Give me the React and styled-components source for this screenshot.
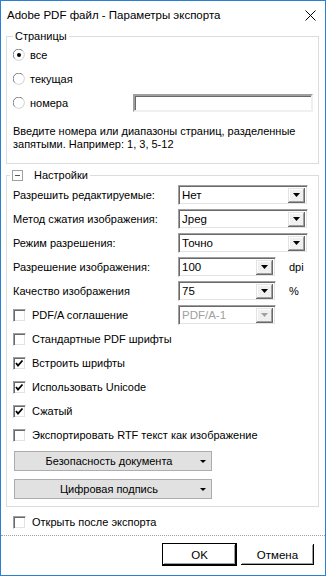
import styled, { createGlobalStyle } from 'styled-components';

const GlobalStyle = createGlobalStyle`
  body {
    margin: 0;
    background: #fff;
    font-family: "Liberation Sans", Arial, sans-serif;
    font-size: 11px;
    color: #000;
  }
`;

function Checkbox({ checked }) {
    return (
        <CheckBox>
            {checked && (
                <svg width="11" height="11" viewBox="0 0 11 11">
                    <polyline points="2,5 4,7.5 8.5,2.5" fill="none" stroke="#000" strokeWidth="1.8" />
                </svg>
            )}
        </CheckBox>
    );
}

function Radio({ checked }) {
    return (
        <RadioIcon width="12" height="12" viewBox="0 0 12 12">
            <circle cx="6" cy="6" r="5.5" fill="#fff" />
            <path d="M1.8 9.7 A5.3 5.3 0 0 1 9.7 1.8" fill="none" stroke="#7a7a7a" />
            <path d="M9.7 1.8 A5.3 5.3 0 0 1 1.8 9.7" fill="none" stroke="#d0d0d0" />
            {checked && <circle cx="6" cy="6" r="2" fill="#000" />}
        </RadioIcon>
    );
}

function Combo({ value, width, disabled }) {
    return (
        <ComboBox $width={width} $disabled={disabled}>
            <ComboValue>{value}</ComboValue>
            <DropButton>
                <svg width="7" height="4" viewBox="0 0 7 4">
                    <polygon points="0,0 7,0 3.5,4" fill={disabled ? '#a0a0a0' : '#000'} />
                </svg>
            </DropButton>
        </ComboBox>
    );
}

function App() {
    return (
        <Window>
            <GlobalStyle />
            <TitleBar>
                <span>Adobe PDF файл - Параметры экспорта</span>
                <svg width="11" height="11" viewBox="0 0 11 11">
                    <path d="M0.5 0.5 L10.5 10.5 M10.5 0.5 L0.5 10.5" stroke="#000" strokeWidth="1" />
                </svg>
            </TitleBar>

            <Body>
                <Group>
                    <Legend>Страницы</Legend>
                    <Row>
                        <Radio checked />
                        <OptionLabel>все</OptionLabel>
                    </Row>
                    <Row>
                        <Radio />
                        <OptionLabel>текущая</OptionLabel>
                    </Row>
                    <Row>
                        <Radio />
                        <OptionLabel>номера</OptionLabel>
                        <PagesInput />
                    </Row>
                    <Hint>
                        Введите номера или диапазоны страниц, разделенные<br />
                        запятыми. Например: 1, 3, 5-12
                    </Hint>
                </Group>

                <Group $settings>
                    <Legend $settings>
                        <Collapse />
                        Настройки
                    </Legend>
                    <Rows>
                        <Row>
                            <FieldLabel>Разрешить редактируемые:</FieldLabel>
                            <Combo value="Нет" width={130} />
                        </Row>
                        <Row>
                            <FieldLabel>Метод сжатия изображения:</FieldLabel>
                            <Combo value="Jpeg" width={130} />
                        </Row>
                        <Row>
                            <FieldLabel>Режим разрешения:</FieldLabel>
                            <Combo value="Точно" width={130} />
                        </Row>
                        <Row>
                            <FieldLabel>Разрешение изображения:</FieldLabel>
                            <Combo value="100" width={98} />
                            <Unit>dpi</Unit>
                        </Row>
                        <Row>
                            <FieldLabel>Качество изображения</FieldLabel>
                            <Combo value="75" width={98} />
                            <Unit>%</Unit>
                        </Row>
                        <Row>
                            <CheckLabel>
                                <Checkbox />
                                <span>PDF/A соглашение</span>
                            </CheckLabel>
                            <Combo value="PDF/A-1" width={98} disabled />
                        </Row>
                        <Row>
                            <CheckLabel>
                                <Checkbox />
                                <span>Стандартные PDF шрифты</span>
                            </CheckLabel>
                        </Row>
                        <Row>
                            <CheckLabel>
                                <Checkbox checked />
                                <span>Встроить шрифты</span>
                            </CheckLabel>
                        </Row>
                        <Row>
                            <CheckLabel>
                                <Checkbox checked />
                                <span>Использовать Unicode</span>
                            </CheckLabel>
                        </Row>
                        <Row>
                            <CheckLabel>
                                <Checkbox checked />
                                <span>Сжатый</span>
                            </CheckLabel>
                        </Row>
                        <Row>
                            <CheckLabel>
                                <Checkbox />
                                <span>Экспортировать RTF текст как изображение</span>
                            </CheckLabel>
                        </Row>
                    </Rows>
                    <MenuButtons>
                        <MenuButton>
                            Безопасность документа
                            <MenuArrow />
                        </MenuButton>
                        <MenuButton>
                            Цифровая подпись
                            <MenuArrow />
                        </MenuButton>
                    </MenuButtons>
                </Group>

                <OpenRow>
                    <CheckLabel>
                        <Checkbox />
                        <span>Открыть после экспорта</span>
                    </CheckLabel>
                </OpenRow>
            </Body>

            <Footer>
                <DialogButton $default>OK</DialogButton>
                <DialogButton>Отмена</DialogButton>
            </Footer>
        </Window>
    );
}

const Window = styled.div`
    width: 326px;
    height: 576px;
    box-sizing: border-box;
    border: 1px solid #2b7fd4;
    background: #fff;
    display: flex;
    flex-direction: column;
    overflow: hidden;
`;

const TitleBar = styled.div`
    flex: none;
    height: 28px;
    display: flex;
    align-items: center;
    justify-content: space-between;
    padding: 0 9px 0 6px;
    font-size: 11.5px;
`;

const Body = styled.div`
    display: flex;
    flex-direction: column;
    padding: 0 6px 0 5px;
    flex: 1;
`;

const Group = styled.fieldset`
    margin: ${props => props.$settings ? '4px 0 0 0' : '0'};
    padding: 0 9px ${props => props.$settings ? '7px' : '12px'} 6px;
    border: 1px solid #dcdcdc;
    min-width: 0;
`;

const Legend = styled.legend`
    display: flex;
    align-items: center;
    height: 14px;
    line-height: 14px;
    padding: 0 2px;
    margin-left: ${props => props.$settings ? '-3px' : '0'};
    gap: 11px;
`;

const Collapse = styled.span`
    position: relative;
    width: 9px;
    height: 9px;
    border: 1px solid #a0a0a0;
    background: #fff;

    &::after {
        content: '';
        position: absolute;
        left: 2px;
        right: 2px;
        top: 4px;
        height: 1px;
        background: #555;
    }
`;

const Rows = styled.div`
    margin-top: 1px;
`;

const Row = styled.div`
    height: 24px;
    display: flex;
    align-items: center;
`;

const RadioIcon = styled.svg`
    flex: none;
`;

const OptionLabel = styled.span`
    margin-left: 5px;
`;

const PagesInput = styled.div`
    margin-left: auto;
    margin-right: -4px;
    width: 176px;
    height: 14px;
    background: #fff;
    border: 2px solid;
    border-color: #a0a0a0 #f0f0f0 #f0f0f0 #a0a0a0;
    box-shadow: inset 1px 1px #696969;
`;

const Hint = styled.p`
    margin: 10px 0 0 0;
    line-height: 13px;
`;

const FieldLabel = styled.span`
    width: 165px;
    flex: none;
`;

const ComboBox = styled.div`
    width: ${props => props.$width}px;
    height: 20px;
    box-sizing: border-box;
    display: flex;
    align-items: center;
    border: 1px solid;
    border-color: #a0a0a0 #fff #fff #a0a0a0;
    box-shadow: inset 1px 1px #696969, inset -1px -1px #e3e3e3;
    background: #fff;
    padding: 2px 2px 2px 3px;
    font-size: 11.5px;
    color: ${props => props.$disabled ? '#a0a0a0' : '#000'};
`;

const ComboValue = styled.span`
    flex: 1;
`;

const DropButton = styled.div`
    width: 17px;
    height: 15px;
    box-sizing: border-box;
    display: flex;
    align-items: center;
    justify-content: center;
    background: #f0f0f0;
    box-shadow: inset -1px -1px #696969, inset 1px 1px #e3e3e3, inset -2px -2px #a0a0a0, inset 2px 2px #fff;
`;

const Unit = styled.span`
    margin-left: 13px;
`;

const CheckLabel = styled.label`
    width: 165px;
    flex: none;
    display: flex;
    align-items: center;
    gap: 6px;
    white-space: nowrap;
`;

const CheckBox = styled.span`
    width: 13px;
    height: 13px;
    box-sizing: border-box;
    flex: none;
    display: flex;
    align-items: center;
    justify-content: center;
    background: #fff;
    border: 1px solid;
    border-color: #a0a0a0 #fff #fff #a0a0a0;
    box-shadow: inset 1px 1px #696969, inset -1px -1px #e3e3e3;
`;

const MenuButtons = styled.div`
    display: flex;
    flex-direction: column;
    gap: 8px;
    margin: 4px 0 0 1px;
`;

const MenuButton = styled.div`
    position: relative;
    width: 198px;
    height: 20px;
    box-sizing: border-box;
    display: flex;
    align-items: center;
    justify-content: center;
    background: #e1e1e1;
    border: 1px solid #adadad;
    padding-right: 8px;
`;

const MenuArrow = styled.span`
    position: absolute;
    right: 5px;
    top: 8px;
    border-left: 3px solid transparent;
    border-right: 3px solid transparent;
    border-top: 3px solid #000;
`;

const OpenRow = styled.div`
    height: 24px;
    display: flex;
    align-items: center;
    padding-left: 7px;
    margin-top: 3px;
`;

const Footer = styled.div`
    flex: none;
    display: flex;
    justify-content: flex-end;
    gap: 3px;
    padding: 7px 10px 9px 0;
    border-top: 1px dotted #a0a0a0;
`;

const DialogButton = styled.div`
    width: 75px;
    height: 23px;
    box-sizing: border-box;
    display: flex;
    align-items: center;
    justify-content: center;
    background: #fff;
    font-size: 11.5px;
    border: 1px solid ${props => props.$default ? '#000' : 'transparent'};
    box-shadow: inset -1px -1px #000, inset 1px 1px #fff, inset -2px -2px #a0a0a0;
`;

export default App;
